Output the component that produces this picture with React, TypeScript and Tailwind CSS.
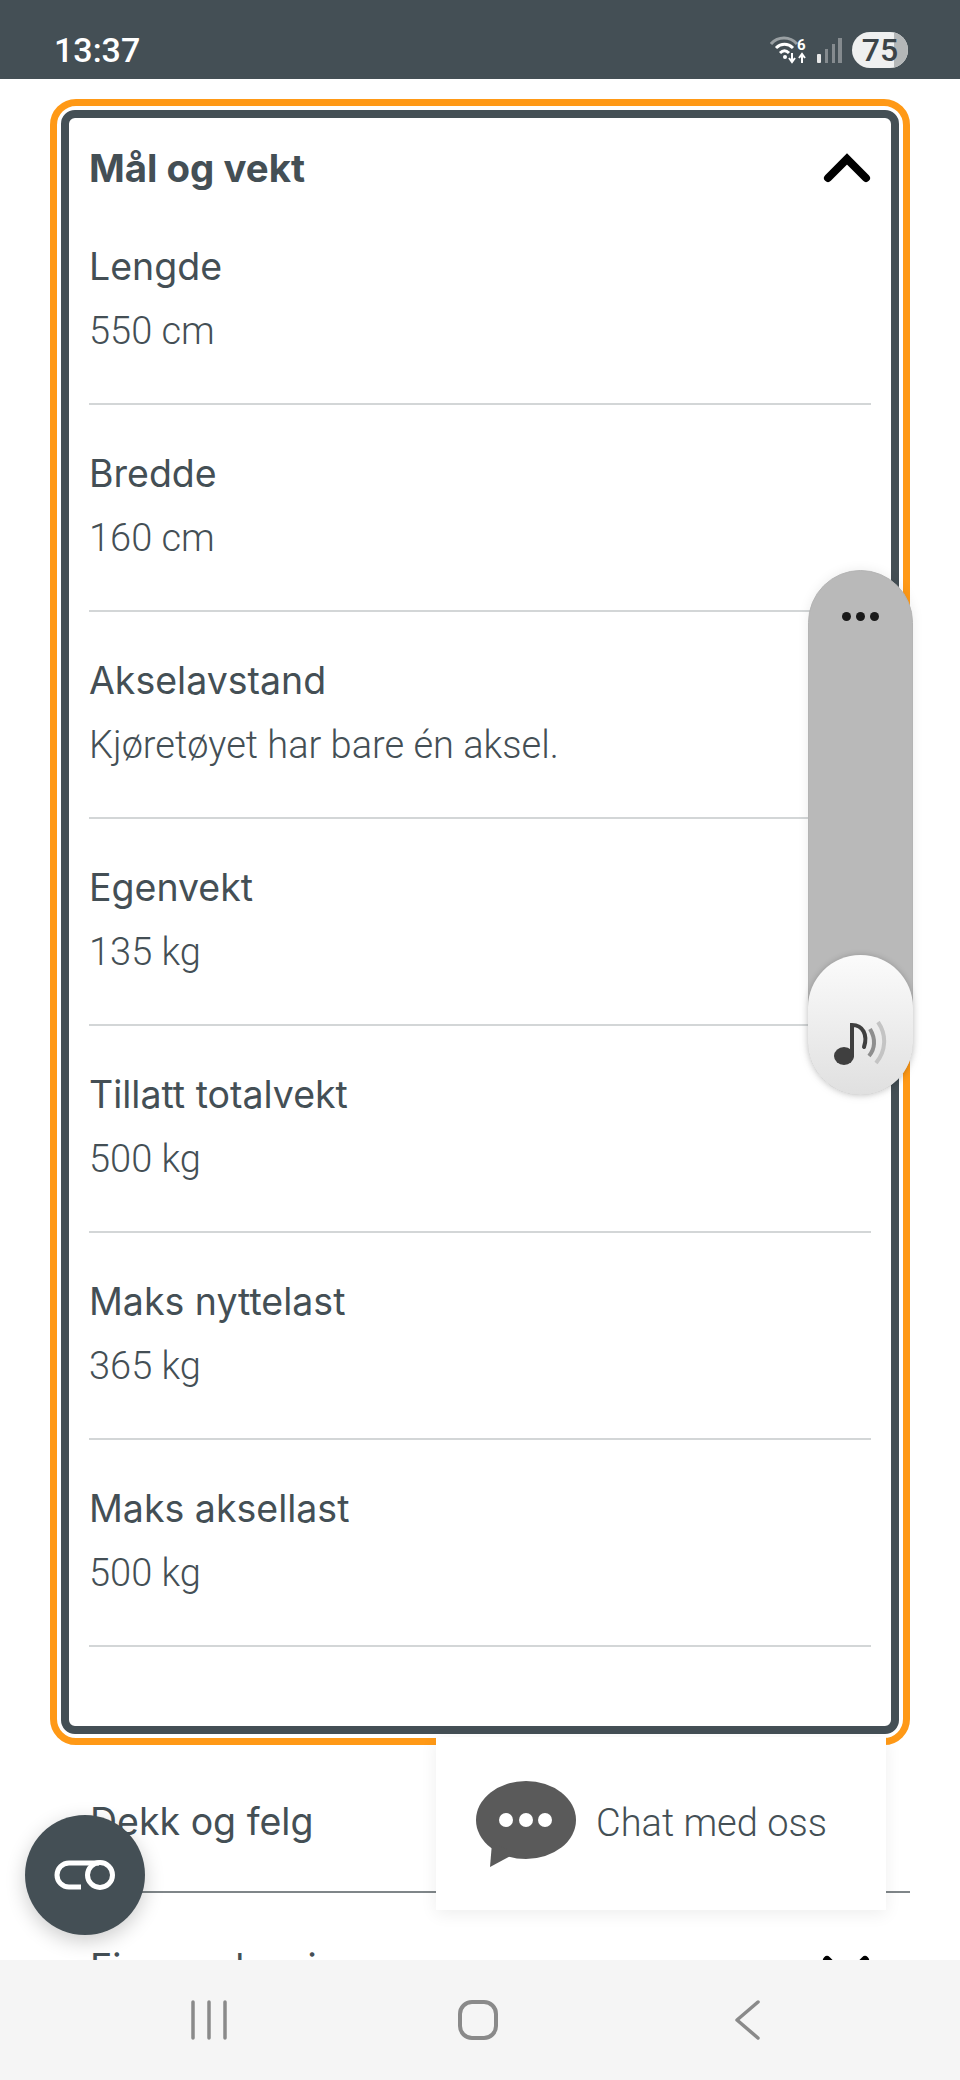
import React from "react";

const rows = [
  ["Lengde", "550 cm"],
  ["Bredde", "160 cm"],
  ["Akselavstand", "Kjøretøyet har bare én aksel."],
  ["Egenvekt", "135 kg"],
  ["Tillatt totalvekt", "500 kg"],
  ["Maks nyttelast", "365 kg"],
  ["Maks aksellast", "500 kg"],
];

function Chevron({ down = false }: { down?: boolean }) {
  return (
    <svg width="48" height="30" viewBox="0 0 48 30" className={down ? "rotate-180" : ""}>
      <path d="M5 25 L24 6 L43 25" fill="none" stroke="#000" strokeWidth="8" strokeLinecap="round" strokeLinejoin="miter" />
    </svg>
  );
}

export default function App() {
  return (
    <div className="relative h-[2080px] w-[960px] overflow-hidden bg-white font-['Inter',sans-serif] text-[#444f55]">
      <div className="flex h-[79px] items-end justify-between bg-[#444f55] pb-[9px] pl-[54px] pr-[52px] font-['Roboto',sans-serif]">
        <span className="text-[34px] leading-[40px] font-medium text-white">13:37</span>
        <div className="flex items-center gap-[7px] pb-[2px]">
          <svg width="40" height="30" viewBox="0 0 40 30">
            <path d="M1 9 C8 1 20 1 27 9" fill="none" stroke="#9aa0a3" strokeWidth="3" />
            <path d="M6 13 C11 8 18 8 23 13" fill="none" stroke="#fff" strokeWidth="3" />
            <path d="M10 18 C13 15 16 15 19 18" fill="none" stroke="#fff" strokeWidth="3" />
            <circle cx="15" cy="22" r="2" fill="#fff" />
            <path d="M22 18 V26 M19 23 L22 27 L25 23 M32 28 V20 M29 23 L32 19 L35 23" fill="none" stroke="#fff" strokeWidth="2" />
            <text x="27" y="15" fill="#fff" fontSize="15" fontWeight="700" fontFamily="Roboto">6</text>
          </svg>
          <svg width="25" height="28" viewBox="0 0 25 28">
            <rect x="0" y="18" width="4" height="9" rx="1" fill="#e8e8e8" />
            <rect x="8" y="13" width="3" height="14" fill="#858b8f" />
            <rect x="15" y="8" width="3" height="19" fill="#858b8f" />
            <rect x="21" y="2" width="4" height="25" fill="#858b8f" />
          </svg>
          <div className="relative ml-[3px] flex h-[36px] w-[56px] items-center justify-center overflow-hidden rounded-full bg-[#eff0f0]">
            <div className="absolute inset-y-0 right-0 w-[14px] bg-[#b4b7b8]" />
            <span className="relative text-[32px] leading-none font-medium text-[#3c4448]">75</span>
          </div>
        </div>
      </div>

      <div className="mx-[50px] mt-[20px] h-[1646px] rounded-[26px] border-[7.5px] border-[#ff9916] p-[4px]">
        <div className="h-full rounded-[14px] border-[8px] border-[#444f55] px-[20px]">
          <div className="flex h-[80px] items-center justify-between pt-[20px]">
            <h2 className="text-[38.4px] leading-[50px] font-bold">Mål og vekt</h2>
            <Chevron />
          </div>
          {rows.map(([a, b]) => (
            <div key={a} className="h-[207px] border-b-[2px] border-[#d3d6d7] pt-[44px]">
              <div className="text-[37.5px] leading-[50px]">{a}</div>
              <div className="mt-[14px] font-['Roboto',sans-serif] text-[38px] leading-[50px] font-light">{b}</div>
            </div>
          ))}
        </div>
      </div>

      <div className="relative mx-[50px] h-[148px] border-b-[2px] border-[#7f8689] pt-[52px] pl-[40px]">
        <div className="text-[37.5px] leading-[50px]">Dekk og felg</div>
      </div>
      <div className="flex items-start justify-between pt-[50px] pr-[90px] pl-[90px]">
        <div className="text-[37.5px] leading-[50px]">Firmaoplysninger</div>
        <div className="pt-[12px]">
          <Chevron down />
        </div>
      </div>

      <div className="absolute top-[570px] left-[808px] h-[525px] w-[105px] rounded-full border border-[#b4b4b4] bg-[#b9b9b9] shadow-[0_0_12px_rgba(0,0,0,0.08)]">
        <div className="flex justify-center gap-[5px] pt-[41px]">
          <span className="size-[9px] rounded-full bg-[#1a1a1a]" />
          <span className="size-[9px] rounded-full bg-[#1a1a1a]" />
          <span className="size-[9px] rounded-full bg-[#1a1a1a]" />
        </div>
      </div>
      <div className="absolute top-[955px] left-[808px] flex h-[140px] w-[105px] items-end justify-center rounded-full bg-gradient-to-b from-[#fbfbfb] to-[#e0e0e0] pb-[26px] shadow-[0_0_6px_rgba(0,0,0,0.2)]">
        <svg width="56" height="48" viewBox="0 0 56 48">
          <ellipse cx="11" cy="35" rx="10" ry="9" fill="#3f3f3f" />
          <path d="M19 35 V4 C30 4 35 14 31 26" fill="none" stroke="#3f3f3f" strokeWidth="4" strokeLinecap="round" />
          <path d="M37 8 C43 18 42 28 36 35" fill="none" stroke="#8e8e8e" strokeWidth="4" />
          <path d="M45 1 C54 14 53 30 43 42" fill="none" stroke="#c4c4c4" strokeWidth="4" />
        </svg>
      </div>

      <div className="absolute top-[1737px] left-[436px] flex h-[173px] w-[450px] items-center gap-[20px] bg-white pl-[40px] shadow-[0_4px_16px_rgba(0,0,0,0.07)]">
        <svg width="100" height="86" viewBox="0 0 100 86">
          <ellipse cx="50" cy="39" rx="50" ry="39" fill="#5a5a5a" />
          <path d="M16 62 L14 86 L40 72 Z" fill="#5a5a5a" />
          <circle cx="30" cy="39" r="7" fill="#fff" />
          <circle cx="50" cy="39" r="7" fill="#fff" />
          <circle cx="69" cy="39" r="7" fill="#fff" />
        </svg>
        <span className="font-['Roboto',sans-serif] text-[38px] font-light">Chat med oss</span>
      </div>

      <div className="absolute top-[1815px] left-[25px] flex size-[120px] items-center justify-center rounded-full bg-[#444f55] shadow-[0_6px_20px_rgba(0,0,0,0.2)]">
        <svg width="62" height="30" viewBox="0 0 62 30">
          <path d="M27 27 H15 A12 12 0 0 1 15 3 H45" fill="none" stroke="#fff" strokeWidth="5" />
          <circle cx="46" cy="15" r="12.5" fill="none" stroke="#fff" strokeWidth="5" />
        </svg>
      </div>

      <div className="absolute inset-x-0 bottom-0 flex h-[120px] items-start bg-[#f5f5f5] pt-[40px] pl-[191px]">
        <svg width="36" height="40" viewBox="0 0 36 40">
          <path d="M2 2 V38 M18 2 V38 M34 2 V38" stroke="#8a8a8a" strokeWidth="3.5" strokeLinecap="round" />
        </svg>
        <svg width="40" height="40" viewBox="0 0 40 40" className="ml-[231px]">
          <rect x="2" y="2" width="36" height="36" rx="12" fill="none" stroke="#8a8a8a" strokeWidth="4" />
        </svg>
        <svg width="26" height="40" viewBox="0 0 26 40" className="ml-[236px]">
          <path d="M24 2 L3 20 L24 38" fill="none" stroke="#8a8a8a" strokeWidth="3.5" strokeLinecap="round" strokeLinejoin="round" />
        </svg>
      </div>
    </div>
  );
}
